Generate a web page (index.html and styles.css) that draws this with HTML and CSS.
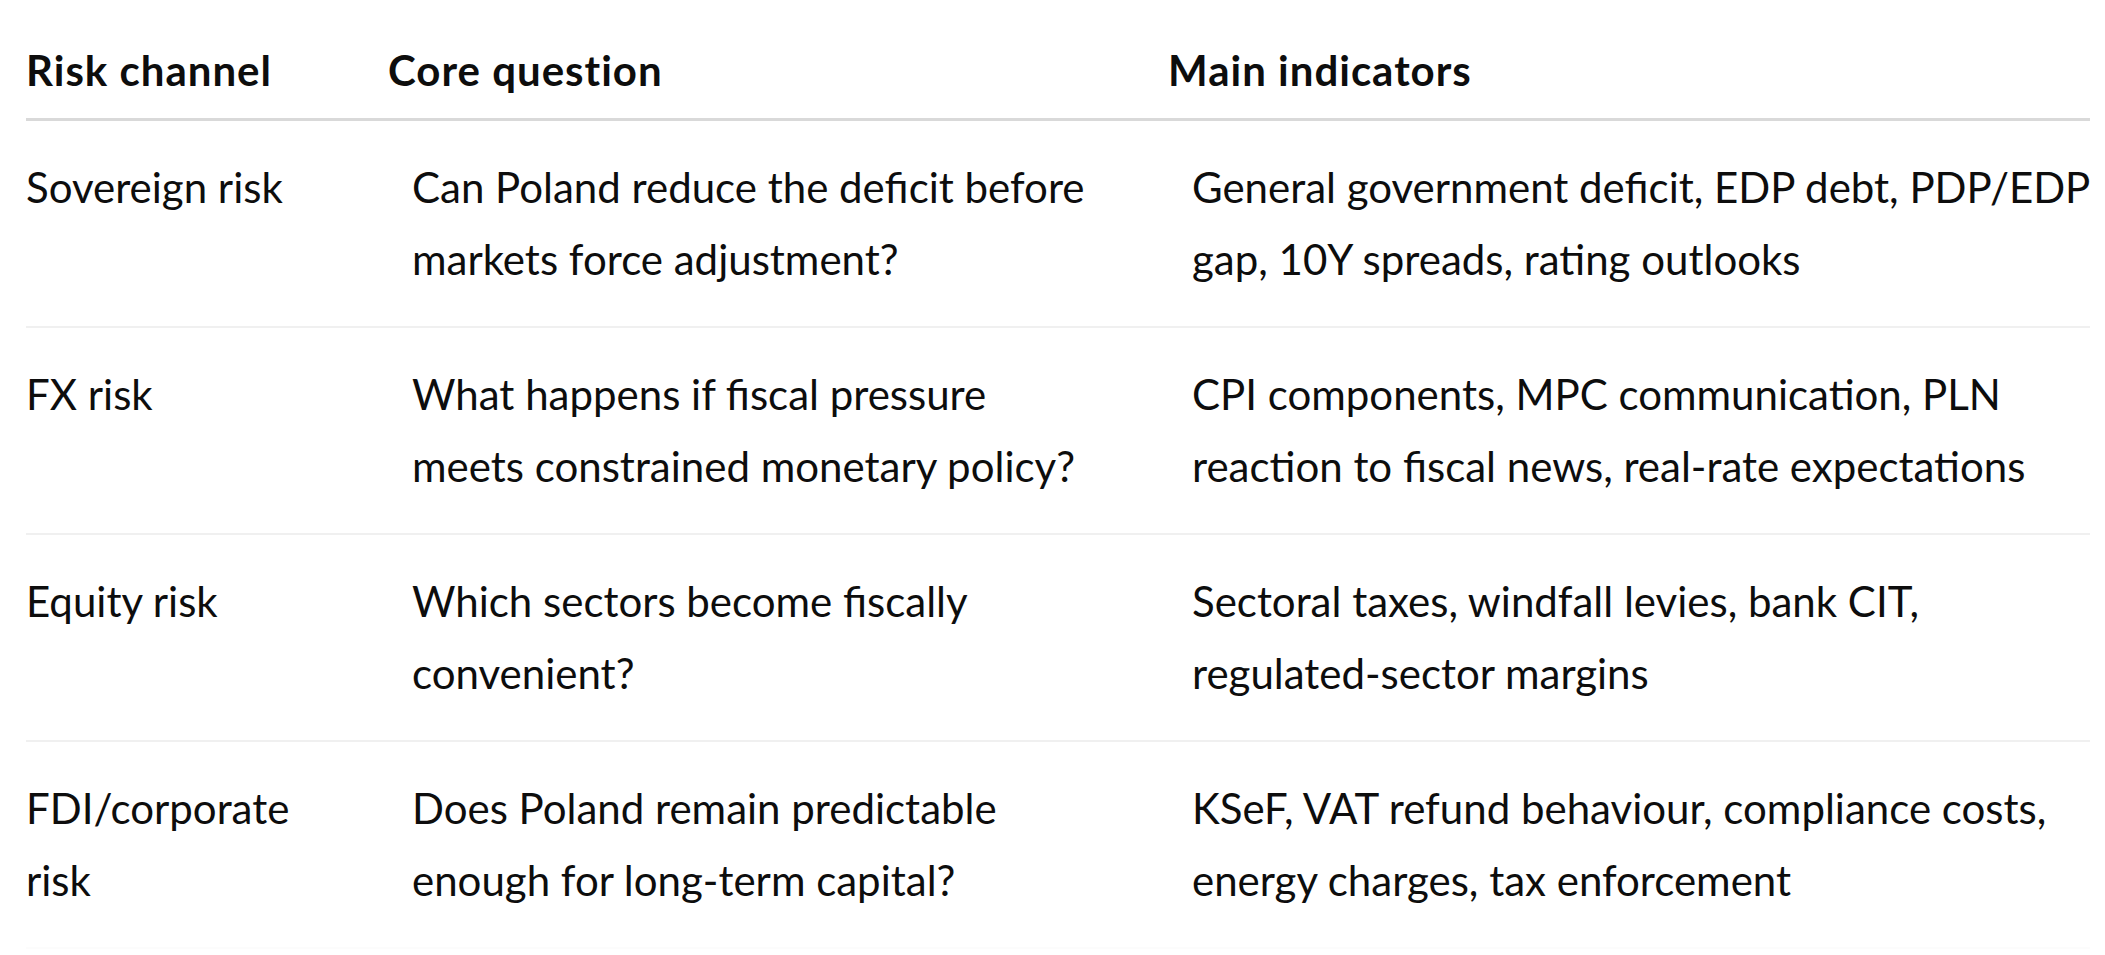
FILE: index.html
```html
<!DOCTYPE html>
<html lang="en">
<head>
<meta charset="utf-8">
<title>Risk channels</title>
<link rel="stylesheet" href="styles.css">
</head>
<body>
<div class="page">
  <table class="risk-table">
    <colgroup>
      <col class="c1">
      <col class="c2">
      <col class="c3">
    </colgroup>
    <thead>
      <tr>
        <th>Risk channel</th>
        <th>Core question</th>
        <th>Main indicators</th>
      </tr>
    </thead>
    <tbody>
      <tr>
        <td>Sovereign risk</td>
        <td>Can Poland reduce the deficit before<br>markets force adjustment?</td>
        <td>General government deficit, EDP debt, PDP/EDP<br>gap, 10Y spreads, rating outlooks</td>
      </tr>
      <tr>
        <td>FX risk</td>
        <td>What happens if fiscal pressure<br>meets constrained monetary policy?</td>
        <td>CPI components, MPC communication, PLN<br>reaction to fiscal news, real-rate expectations</td>
      </tr>
      <tr>
        <td>Equity risk</td>
        <td>Which sectors become fiscally<br>convenient?</td>
        <td>Sectoral taxes, windfall levies, bank CIT,<br>regulated-sector margins</td>
      </tr>
      <tr>
        <td>FDI/corporate<br>risk</td>
        <td>Does Poland remain predictable<br>enough for long-term capital?</td>
        <td>KSeF, VAT refund behaviour, compliance costs,<br>energy charges, tax enforcement</td>
      </tr>
    </tbody>
  </table>
</div>
</body>
</html>
```

FILE: styles.css
```css
html, body {
  margin: 0;
  padding: 0;
  background: #ffffff;
}

body {
  font-family: "Lato", "Open Sans", sans-serif;
  color: #0d0d0d;
  font-size: 42px;
}

.page {
  padding-left: 26px;
}

.risk-table {
  width: 2064px;
  border-collapse: collapse;
  table-layout: fixed;
}

.c1 { width: 362px; }
.c2 { width: 780px; }
.c3 { width: 922px; }

.risk-table th {
  text-align: left;
  font-weight: 700;
  letter-spacing: 1px;
  line-height: 72.5px;
  padding: 34px 0 11px 0;
  border-bottom: 3px solid #d9d9d9;
  white-space: nowrap;
}

.risk-table td {
  text-align: left;
  vertical-align: top;
  font-weight: 400;
  line-height: 72.5px;
  padding: 30px 0 30px 24px;
  border-bottom: 2px solid #f0f0f0;
  white-space: nowrap;
}

.risk-table td:first-child {
  padding-left: 0;
}

.risk-table tbody tr:last-child td {
  border-bottom: 2px solid #fcfcfc;
}
```
